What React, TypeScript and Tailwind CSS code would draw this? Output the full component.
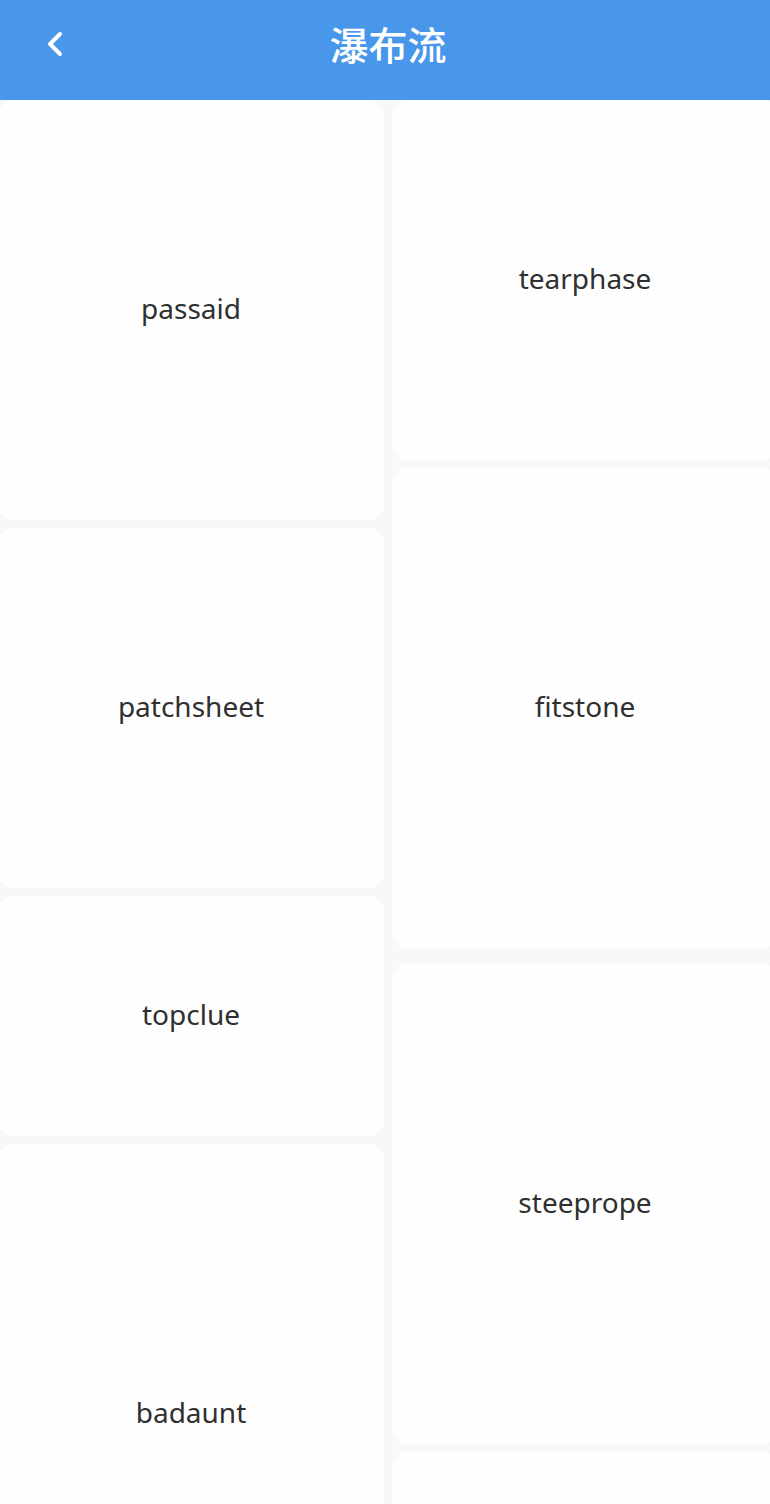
import React from "react";

type Item = { label: string; h: number; mt?: number };

const left: Item[] = [
  { label: "passaid", h: 420 },
  { label: "patchsheet", h: 360 },
  { label: "topclue", h: 240 },
  { label: "badaunt", h: 540 },
];

const right: Item[] = [
  { label: "tearphase", h: 360 },
  { label: "fitstone", h: 480 },
  { label: "steeprope", h: 480, mt: 8 },
  { label: "", h: 300 },
];

function Card({ item }: { item: Item }) {
  return (
    <div
      className="flex w-full shrink-0 items-center justify-center rounded-[16px] bg-[#fefefe]"
      style={{ height: item.h, marginTop: item.mt ?? 0 }}
    >
      <span
        className="mt-[-4px] text-[28px] leading-none text-[#303030]"
        style={{ fontFamily: '"Noto Sans", sans-serif' }}
      >
        {item.label}
      </span>
    </div>
  );
}

export default function App() {
  return (
    <div className="h-[1504px] w-[770px] overflow-hidden bg-[#f8f8f8]">
      <header className="relative flex h-[100px] items-center bg-[#4897ea] px-[40px]">
        <svg width="24" height="32" viewBox="0 0 24 32" className="ml-[2px] mt-[-12px]">
          <polyline
            points="18,6 8,16 18,26"
            fill="none"
            stroke="white"
            strokeWidth="4"
            strokeLinecap="round"
            strokeLinejoin="round"
          />
        </svg>
        <h1
          className="absolute left-0 right-0 top-[19px] pl-[6px] text-center text-[39px] font-medium leading-[48px] text-white"
          style={{ fontFamily: '"Noto Sans CJK SC", "Noto Sans", sans-serif' }}
        >
          瀑布流
        </h1>
      </header>
      <div className="ml-[-2px] flex w-[780px] gap-[8px]">
        <div className="flex w-[386px] flex-col gap-[8px]">
          {left.map((it, i) => (
            <Card key={i} item={it} />
          ))}
        </div>
        <div className="flex w-[386px] flex-col gap-[8px]">
          {right.map((it, i) => (
            <Card key={i} item={it} />
          ))}
        </div>
      </div>
    </div>
  );
}
